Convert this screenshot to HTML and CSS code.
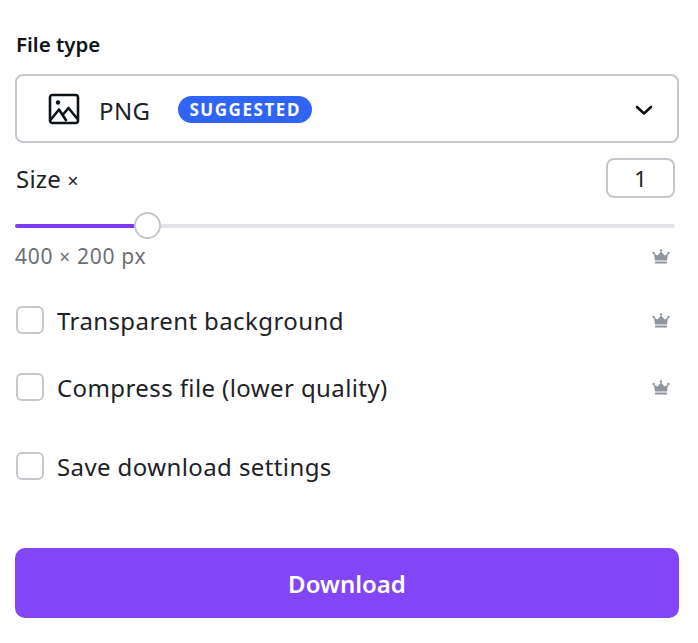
FILE: index.html
```html
<!DOCTYPE html>
<html lang="en">
<head>
<meta charset="utf-8">
<title>Download</title>
<link rel="stylesheet" href="styles.css">
</head>
<body>
<main class="panel">
  <div class="label">File type</div>
  <div class="select">
    <svg class="img-icon" viewBox="0 0 32 32" width="32" height="32" fill="none" stroke="#0e1318" stroke-width="2.6" stroke-linejoin="round"><rect x="2" y="2" width="28" height="28" rx="2.5"/><circle cx="10" cy="9.500" r="2.200" fill="#0e1318" stroke="none"/><path d="M2.500 27 11 16.500l7.500 11.500M15 21.500l5.500-6.500L29.500 26"/></svg>
    <span class="select-text">PNG</span>
    <span class="badge">SUGGESTED</span>
    <svg class="chev" viewBox="0 0 18 12" width="18" height="12" fill="none" stroke="#0e1318" stroke-width="2.600" stroke-linecap="round" stroke-linejoin="round"><path d="M2 3l7 6.500L16 3"/></svg>
  </div>
  <div class="size-row">
    <span class="size-label">Size <span class="times">×</span></span>
    <span class="size-box">1</span>
  </div>
  <div class="slider">
    <div class="slider-fill"></div>
    <div class="slider-thumb"></div>
  </div>
  <div class="row dims">
    <span>400 <span class="times">×</span> 200 px</span>
    <svg class="crown" viewBox="0 0 18 16" width="18" height="16"><use href="#crown"/></svg>
  </div>
  <div class="row check-row first">
    <span class="check"></span><span class="check-text">Transparent background</span>
    <svg class="crown" viewBox="0 0 18 16" width="18" height="16"><use href="#crown"/></svg>
  </div>
  <div class="row check-row second">
    <span class="check"></span><span class="check-text">Compress file (lower quality)</span>
    <svg class="crown" viewBox="0 0 18 16" width="18" height="16"><use href="#crown"/></svg>
  </div>
  <div class="row check-row third">
    <span class="check"></span><span class="check-text">Save download settings</span>
  </div>
  <button class="download">Download</button>
</main>
<svg class="defs" width="0" height="0"><defs><g id="crown" fill="#8f959e"><circle cx="9" cy="1.500" r="1.200"/><circle cx="1.600" cy="4" r="1.200"/><circle cx="16.400" cy="4" r="1.200"/><path d="M2 4.500 5.500 6.500 9 2.500 12.500 6.500 16 4.500 15 11.500H3z"/><rect x="3" y="12.500" width="12" height="2" rx=".6"/></g></defs></svg>
</body>
</html>
```
FILE: styles.css
```css
* { box-sizing: border-box; }
html, body { margin: 0; background: #fff; }
body { font-family: "Noto Sans", "Liberation Sans", sans-serif; color: #0e1318; }
.panel { width: 698px; height: 643px; padding: 31px 19px 0 15px; display: flex; flex-direction: column; overflow: hidden; }
.label { font-size: 20.5px; font-weight: 600; line-height: 27px; margin-left: 1px; }
.select { margin-top: 16px; height: 69px; border: 2px solid #c4c8cd; border-radius: 8px; display: flex; align-items: center; padding: 0 24px 0 31px; }
.img-icon { flex: none; }
.select-text { margin-left: 19px; padding-top: 3px; font-size: 24px; letter-spacing: .4px; color: #1d2227; }
.badge { margin-left: 28px; margin-top: 2px; background: #2f64f5; color: #fff; border-radius: 14px; height: 27px; padding: 0 11px; font-size: 17px; line-height: 27px; font-weight: 700; letter-spacing: 1.550px; }
.chev { margin-left: auto; margin-top: 2px; }
.size-row { margin-top: 15px; height: 40px; display: flex; align-items: center; justify-content: space-between; padding-right: 4px; }
.size-label { font-size: 24px; letter-spacing: .2px; margin-left: 1px; color: #1d2227; }
.times { font-size: 19px; }
.size-box { width: 69px; height: 40px; border: 2px solid #c4c8cd; border-radius: 8px; text-align: center; line-height: 36px; font-size: 22px; color: #1d2227; }
.slider { position: relative; margin-top: 26px; margin-right: 4px; height: 4px; background: #e3e4e7; border-radius: 2px; }
.slider-fill { height: 4px; width: 132px; background: #7d3bf0; border-radius: 2px; }
.slider-thumb { position: absolute; left: 119px; top: -12px; width: 27px; height: 27px; border-radius: 50%; background: #fff; border: 2px solid #c4c8cd; }
.row { display: flex; align-items: center; }
.dims { margin-top: 14px; height: 28px; font-size: 21px; letter-spacing: .7px; color: #6c7075; padding-right: 9px; justify-content: space-between; }
.check-row { height: 28px; padding-right: 9px; }
.first { margin-top: 36px; }
.second { margin-top: 39px; }
.third { margin-top: 51px; }
.check { flex: none; width: 28px; height: 28px; margin-left: 1px; border: 2px solid #c4c8cd; border-radius: 6px; }
.check-text { margin-left: 13px; font-size: 24px; letter-spacing: .4px; color: #1d2227; }
.crown { flex: none; position: relative; top: 1px; }
.check-row .crown { margin-left: auto; }
.download { margin-top: 68px; height: 70px; width: 100%; border: 0; border-radius: 10px; background: #8246f6; color: #fff; font: 600 24px "Noto Sans", "Liberation Sans", sans-serif; }
.defs { position: absolute; }
```
